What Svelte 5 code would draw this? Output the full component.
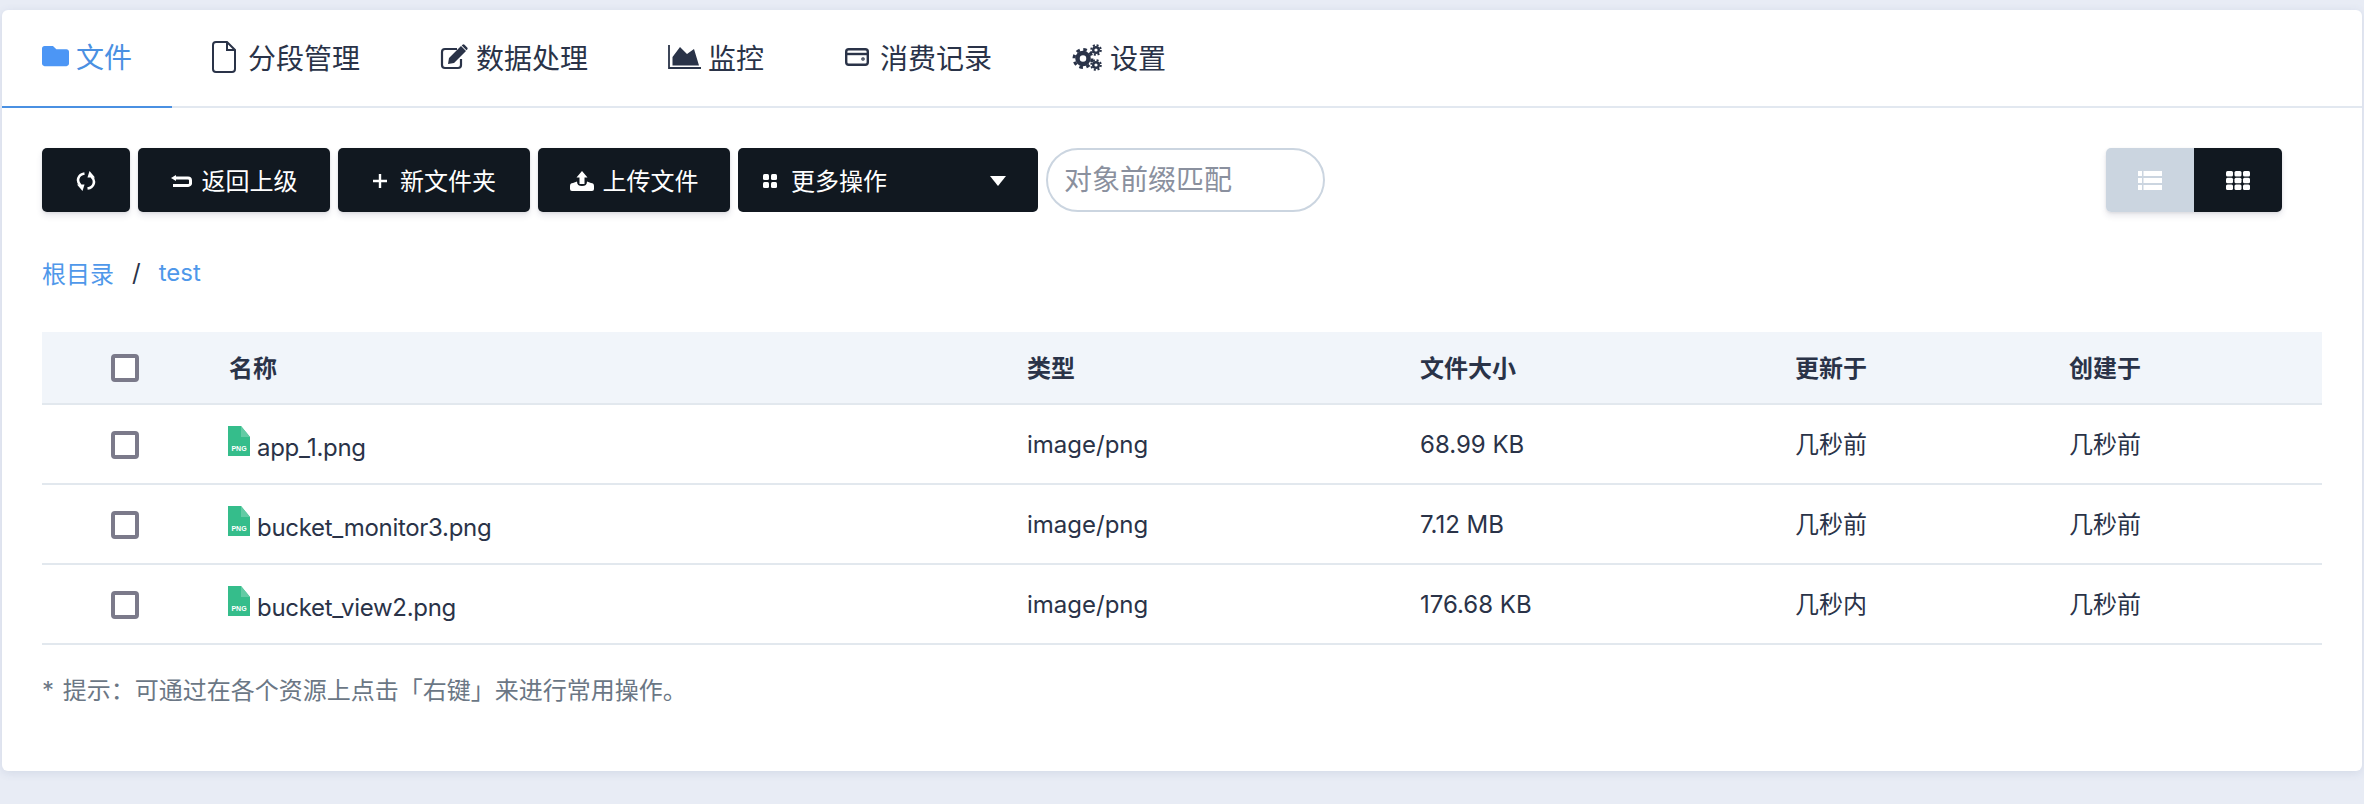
<script>
  const files = [
    { name: "app_1.png", type: "image/png", size: "68.99 KB", updated: "几秒前", created: "几秒前" },
    { name: "bucket_monitor3.png", type: "image/png", size: "7.12 MB", updated: "几秒前", created: "几秒前" },
    { name: "bucket_view2.png", type: "image/png", size: "176.68 KB", updated: "几秒内", created: "几秒前" }
  ];
</script>

<div class="page">
  <div class="card">
    <nav class="tabs">
      <a class="tab active">
        <svg width="27" height="24" viewBox="0 32 512 448"><path fill="currentColor" d="M464 128H272l-64-64H48C21.49 64 0 85.49 0 112v288c0 26.51 21.49 48 48 48h416c26.51 0 48-21.49 48-48V176c0-26.51-21.49-48-48-48z"/></svg>
        文件
      </a>
      <a class="tab wide-gap">
        <svg width="24" height="32" viewBox="0 0 24 32" fill="none" stroke="currentColor" stroke-width="2"><path d="M4 1h11l8 8v19a3 3 0 0 1-3 3H4a3 3 0 0 1-3-3V4a3 3 0 0 1 3-3z"/><path d="M15 1v8h8"/></svg>
        分段管理
      </a>
      <a class="tab">
        <svg width="28" height="26" viewBox="0 0 28 26"><path fill="none" stroke="currentColor" stroke-width="2.2" d="M21 15v6a3 3 0 0 1-3 3H5a3 3 0 0 1-3-3V8a3 3 0 0 1 3-3h12"/><path fill="currentColor" d="M9 14 21 2l5 5-12 12-6 1zM22.500 .8a1.500 1.500 0 0 1 2 0l2.700 2.700a1.500 1.500 0 0 1 0 2l-.7.7-4.800-4.700z"/></svg>
        数据处理
      </a>
      <a class="tab chart">
        <svg width="33" height="24" viewBox="0 0 33 24"><path fill="none" stroke="currentColor" stroke-width="1.800" d="M1 0v23h32"/><path fill="currentColor" d="M4.500 20.500V12L12 2l7 7 7-5 5 16.500z"/></svg>
        监控
      </a>
      <a class="tab wallet">
        <svg width="24" height="18" viewBox="0 0 24 18" fill="none" stroke="currentColor" stroke-width="2.400"><rect x="1.200" y="1.200" width="21.600" height="15.600" rx="2.500"/><path d="M1 6h22"/><circle cx="18" cy="11" r=".6"/></svg>
        消费记录
      </a>
      <a class="tab">
        <svg width="30" height="27" viewBox="0 0 30 27" fill="none" stroke="currentColor">
          <circle cx="11" cy="14.500" r="5.500" stroke-width="4.500"/>
          <circle cx="11" cy="14.500" r="9" stroke-width="3" stroke-dasharray="3.600 3.470"/>
          <circle cx="24" cy="6" r="2.800" stroke-width="2.400"/>
          <circle cx="24" cy="6" r="4.800" stroke-width="2" stroke-dasharray="2 1.770"/>
          <circle cx="24" cy="21" r="2.800" stroke-width="2.400"/>
          <circle cx="24" cy="21" r="4.800" stroke-width="2" stroke-dasharray="2 1.770"/>
        </svg>
        设置
      </a>
    </nav>

    <div class="body">
      <div class="toolbar">
        <button class="btn refresh" aria-label="refresh">
          <svg width="20" height="20" viewBox="0 0 20 20"><path fill="none" stroke="#fff" stroke-width="2.600" d="M8.500 2.500C2 3.500 0 10 4.500 14.500"/><path fill="#fff" d="M1 13.500h7.500L6.500 20z"/><path fill="none" stroke="#fff" stroke-width="2.600" d="M11.500 17.500C18 16.500 20 10 15.500 5.500"/><path fill="#fff" d="M19 6.500h-7.500L13.500 0z"/></svg>
        </button>
        <button class="btn">
          <svg width="21" height="12" viewBox="0 0 21 12"><path fill="none" stroke="#fff" stroke-width="3" d="M4 3h13a2.500 2.500 0 0 1 2.500 2.500v2A2.500 2.500 0 0 1 17 10.500H2"/><path fill="#fff" d="M0 3l5-3v6z"/></svg>
          返回上级
        </button>
        <button class="btn add">
          <svg width="16" height="16" viewBox="0 0 16 16"><path stroke="#fff" stroke-width="2.400" d="M8 1v14M1 8h14"/></svg>
          新文件夹
        </button>
        <button class="btn upload">
          <svg width="24" height="20" viewBox="0 0 24 20"><path fill="#fff" d="M12 0l5.500 6.500h-3V13h-5V6.500h-3zM0 15q0-3 3-3l4-1.500Q7 15 12 15t5-4.500l4 1.500q3 0 3 3v3q0 2-2 2H2q-2 0-2-2z"/></svg>
          上传文件
        </button>
        <button class="btn more">
          <span class="more-label">
            <svg width="14" height="14" viewBox="0 0 14 14" fill="#fff"><rect width="6" height="6" rx="1.500"/><rect x="8" width="6" height="6" rx="1.500"/><rect y="8" width="6" height="6" rx="1.500"/><rect x="8" y="8" width="6" height="6" rx="1.500"/></svg>
            更多操作
          </span>
          <svg width="16" height="10" viewBox="0 0 16 10"><path fill="#fff" d="M0 0h16L8 10z"/></svg>
        </button>
        <input class="search" placeholder="对象前缀匹配" />
        <div class="view-switch">
          <button class="view light" aria-label="list">
            <svg width="24" height="19" viewBox="0 0 24 19" fill="#fff"><path d="M0 0h4v5H0zM5.500 0H24v5H5.500zM0 7h4v5H0zM5.500 7H24v5H5.500zM0 14h4v5H0zM5.500 14H24v5H5.500z"/></svg>
          </button>
          <button class="view dark" aria-label="grid">
            <svg width="24" height="19" viewBox="0 0 24 19" fill="#fff"><rect width="7" height="5.500" rx="1.500"/><rect x="8.500" width="7" height="5.500" rx="1.500"/><rect x="17" width="7" height="5.500" rx="1.500"/><rect y="6.800" width="7" height="5.500" rx="1.500"/><rect x="8.500" y="6.800" width="7" height="5.500" rx="1.500"/><rect x="17" y="6.800" width="7" height="5.500" rx="1.500"/><rect y="13.500" width="7" height="5.500" rx="1.500"/><rect x="8.500" y="13.500" width="7" height="5.500" rx="1.500"/><rect x="17" y="13.500" width="7" height="5.500" rx="1.500"/></svg>
          </button>
        </div>
      </div>

      <div class="crumbs">
        <a>根目录</a>
        <span class="sep">/</span>
        <a>test</a>
      </div>

      <table>
        <colgroup>
          <col style="width:187px" />
          <col style="width:798px" />
          <col style="width:393px" />
          <col style="width:375px" />
          <col style="width:274px" />
          <col />
        </colgroup>
        <thead>
          <tr>
            <th class="check"><input type="checkbox" /></th>
            <th>名称</th>
            <th>类型</th>
            <th>文件大小</th>
            <th>更新于</th>
            <th>创建于</th>
          </tr>
        </thead>
        <tbody>
          {#each files as file}
            <tr>
              <td class="check"><input type="checkbox" /></td>
              <td>
                <span class="file">
                  <svg width="22" height="30" viewBox="0 0 22 30">
                    <path fill="#35bd8b" d="M0 0h13l9 11v19H0z"/>
                    <path fill="#62cba4" d="M13 0l9 11h-9z"/>
                    <text x="11" y="25" text-anchor="middle" font-size="7" font-weight="700" fill="#fff" font-family="Liberation Sans, sans-serif">PNG</text>
                  </svg>
                  <span class="file-name">{file.name}</span>
                </span>
              </td>
              <td>{file.type}</td>
              <td>{file.size}</td>
              <td><span class="cn">{file.updated}</span></td>
              <td><span class="cn">{file.created}</span></td>
            </tr>
          {/each}
        </tbody>
      </table>

      <p class="hint">* 提示：可通过在各个资源上点击「右键」来进行常用操作。</p>
    </div>
  </div>
</div>

<style>
  :global(body) {
    margin: 0;
    background: #e8ecf5;
  }

  .page {
    height: 804px;
    padding: 10px 2px 0;
    box-sizing: border-box;
    font-family: Inter, "Noto Sans CJK SC", sans-serif;
    color: #2a3348;
  }

  .card {
    height: 761px;
    background: #fff;
    border-radius: 6px;
    box-shadow: 0 2px 10px rgba(60, 80, 130, 0.12);
  }

  .tabs {
    display: flex;
    height: 98px;
    box-sizing: border-box;
    border-bottom: 2px solid #e2e8f0;
  }

  .tab {
    display: flex;
    align-items: center;
    gap: 8px;
    height: 98px;
    box-sizing: border-box;
    padding: 0 40px 4px;
    font-size: 28px;
    color: #2a3348;
  }

  .tab.active {
    gap: 7px;
    color: #4a90e2;
    border-bottom: 2px solid #4a90e2;
  }

  .tab.active svg {
    color: #4c96f5;
  }

  .tab.wide-gap {
    gap: 12px;
  }

  .tab.chart {
    gap: 7px;
  }

  .tab.wallet {
    padding-left: 41px;
    gap: 11px;
  }

  .body {
    padding: 40px;
  }

  .toolbar {
    display: flex;
    gap: 8px;
    height: 64px;
  }

  .btn {
    display: flex;
    align-items: center;
    justify-content: center;
    gap: 10px;
    width: 192px;
    height: 64px;
    padding: 0 0 2px;
    border: none;
    border-radius: 5px;
    background: #111820;
    color: #fff;
    font: inherit;
    font-size: 24px;
    box-shadow: 0 4px 6px rgba(50, 50, 93, 0.11), 0 1px 3px rgba(0, 0, 0, 0.08);
  }

  .btn svg {
    position: relative;
    top: 2px;
  }

  .btn.refresh {
    width: 88px;
  }

  .btn.add {
    gap: 12px;
  }

  .btn.upload {
    gap: 9px;
  }

  .btn.more {
    justify-content: space-between;
    width: 300px;
    padding: 0 32px 2px 25px;
    box-shadow: none;
  }

  .more-label {
    display: flex;
    align-items: center;
    gap: 14px;
  }

  .search {
    width: 279px;
    height: 64px;
    box-sizing: border-box;
    padding: 0 16px;
    border: 2px solid #cbd5e0;
    border-radius: 32px;
    font: inherit;
    font-size: 28px;
    outline: none;
  }

  .search::placeholder {
    color: #8a909e;
    opacity: 1;
  }

  .view-switch {
    display: flex;
    margin-left: auto;
    margin-right: 40px;
    border-radius: 5px;
    overflow: hidden;
    box-shadow: 0 4px 6px rgba(50, 50, 93, 0.11), 0 1px 3px rgba(0, 0, 0, 0.08);
  }

  .view {
    display: flex;
    align-items: center;
    justify-content: center;
    width: 88px;
    border: none;
    padding: 0;
  }

  .view.light {
    background: #cbd5e0;
  }

  .view.dark {
    background: #111820;
  }

  .crumbs {
    display: flex;
    align-items: center;
    gap: 16px;
    margin-top: 44px;
    height: 32px;
    font-size: 24px;
    color: #4f98ea;
  }

  .sep {
    color: #2a3348;
    padding: 0 2px;
  }

  table {
    width: 100%;
    margin-top: 44px;
    border-collapse: collapse;
    table-layout: fixed;
    font-size: 24px;
  }

  th {
    height: 68px;
    padding: 0 0 3px;
    background: #f1f5fa;
    border-bottom: 2px solid #e2e8ee;
    text-align: left;
    font-weight: 700;
  }

  td {
    height: 78px;
    padding: 0;
    border-bottom: 2px solid #e2e8ee;
  }

  .check {
    padding-left: 69px;
  }

  input[type="checkbox"] {
    appearance: none;
    display: block;
    width: 28px;
    height: 28px;
    margin: 2px 0 0;
    box-sizing: border-box;
    background: #fff;
    border: 4px solid #7b7a8a;
    border-radius: 4px;
  }

  th input[type="checkbox"] {
    margin-top: 4px;
  }

  .file {
    display: flex;
    align-items: flex-end;
    gap: 7px;
    margin-left: -1px;
  }

  .file svg {
    position: relative;
    top: -3px;
  }

  .file-name {
    position: relative;
    top: 3px;
    letter-spacing: -0.3px;
  }

  .cn {
    position: relative;
    top: -2px;
  }

  .hint {
    margin: 30px 0 0;
    font-size: 24px;
    line-height: 32px;
    word-spacing: 2px;
    color: #6b7785;
  }
</style>
